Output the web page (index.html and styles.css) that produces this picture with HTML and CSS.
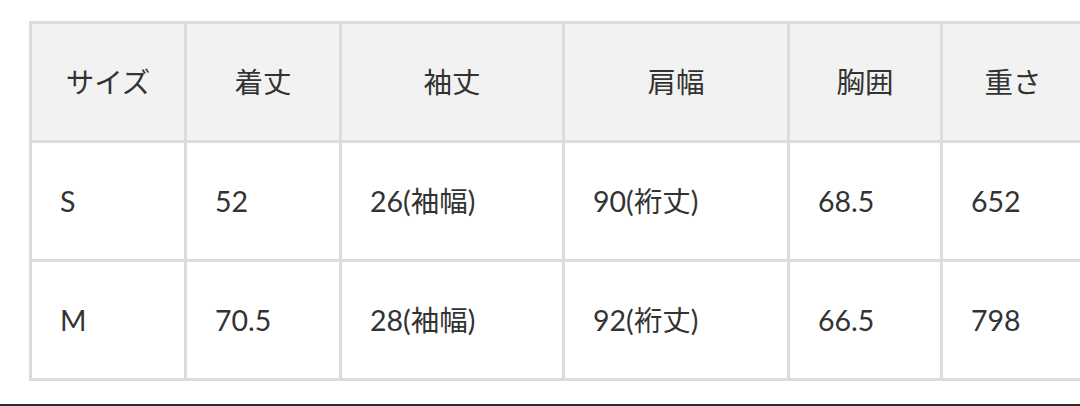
FILE: index.html
```html
<!DOCTYPE html>
<html lang="ja">
<head>
<meta charset="utf-8">
<title>サイズ表</title>
<link rel="stylesheet" href="styles.css">
</head>
<body>
<div class="page">
  <div class="size-table" role="table">
    <div class="cell head" role="columnheader">サイズ</div>
    <div class="cell head" role="columnheader">着丈</div>
    <div class="cell head" role="columnheader">袖丈</div>
    <div class="cell head" role="columnheader">肩幅</div>
    <div class="cell head" role="columnheader">胸囲</div>
    <div class="cell head" role="columnheader">重さ</div>

    <div class="cell" role="cell">S</div>
    <div class="cell" role="cell">52</div>
    <div class="cell" role="cell">26(袖幅)</div>
    <div class="cell" role="cell">90(裄丈)</div>
    <div class="cell" role="cell">68.5</div>
    <div class="cell" role="cell">652</div>

    <div class="cell" role="cell">M</div>
    <div class="cell" role="cell">70.5</div>
    <div class="cell" role="cell">28(袖幅)</div>
    <div class="cell" role="cell">92(裄丈)</div>
    <div class="cell" role="cell">66.5</div>
    <div class="cell" role="cell">798</div>
  </div>
</div>
<div class="rule"></div>
</body>
</html>
```
FILE: styles.css
```css
html, body {
  margin: 0;
  padding: 0;
  background: #ffffff;
  overflow: hidden;
}
body {
  width: 1080px;
  height: 406px;
  font-family: Lato, "Noto Sans CJK JP", sans-serif;
  color: #333333;
}
.page {
  padding: 21px 0 0 29px;
  height: 383px;
  box-sizing: border-box;
  overflow: hidden;
}
.size-table {
  display: grid;
  grid-template-columns: 152px 152px 220px 222px 150px 140px;
  grid-auto-rows: 116px;
  gap: 3px;
  padding: 3px;
  background: #dcdcdc;
  width: max-content;
}
.cell {
  background: #ffffff;
  display: flex;
  align-items: center;
  padding-left: 28px;
  font-size: 28.5px;
  line-height: 1;
  white-space: nowrap;
}
.cell.head {
  background: #f2f2f2;
  justify-content: center;
  padding-left: 0;
}
.rule {
  margin-top: 21px;
  height: 2px;
  background: #2b2b2b;
}
```
